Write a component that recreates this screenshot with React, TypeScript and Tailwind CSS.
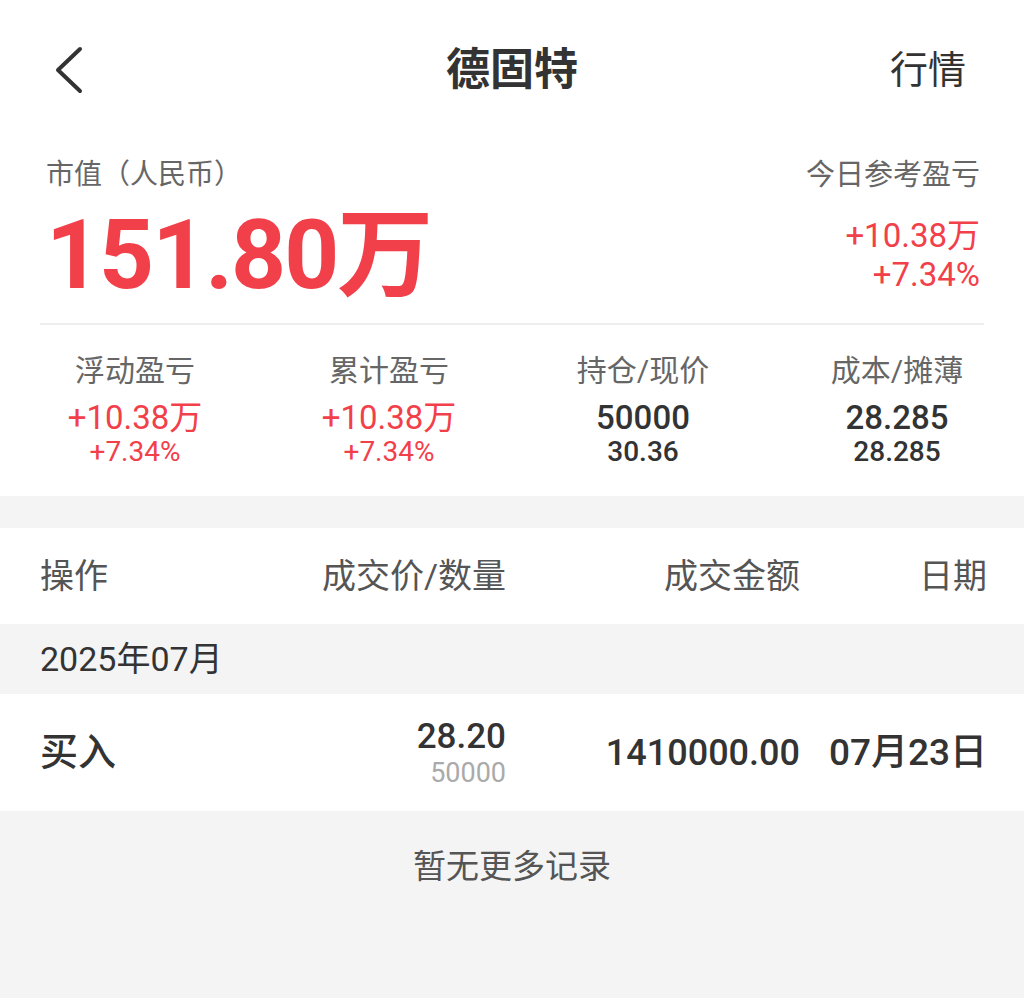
import React from "react";

const stats = [
  { label: "浮动盈亏", top: "+10.38万", bottom: "+7.34%", red: true },
  { label: "累计盈亏", top: "+10.38万", bottom: "+7.34%", red: true },
  { label: "持仓/现价", top: "50000", bottom: "30.36", red: false },
  { label: "成本/摊薄", top: "28.285", bottom: "28.285", red: false },
];

function BackIcon() {
  return (
    <svg width="36" height="48" viewBox="0 0 36 48" fill="none">
      <path
        d="M28 3 L6 24 L28 45"
        stroke="#333"
        strokeWidth="4"
        strokeLinecap="round"
        strokeLinejoin="round"
      />
    </svg>
  );
}

export default function App() {
  return (
    <div className="w-[1024px] min-h-[998px] bg-[#f4f4f4] font-['Roboto','Noto_Sans_CJK_SC',sans-serif] text-[#333]">
      <div className="bg-white">
        {/* nav */}
        <div className="relative flex h-[140px] items-center justify-between pl-[52px] pr-[58px]">
          <BackIcon />
          <div className="absolute left-1/2 -translate-x-1/2 text-[44px] font-bold leading-none">
            德固特
          </div>
          <div className="text-[38px] leading-none">行情</div>
        </div>

        {/* market value */}
        <div className="flex justify-between pl-[46px] pr-[44px] pt-[17px]">
          <div>
            <div className="text-[28px] leading-[36px] text-[#666]">市值（人民币）</div>
            <div className="mt-[14px] text-[96px] font-bold leading-[96px] tracking-[-2px] text-[#f2404a]">
              151.80万
            </div>
          </div>
          <div className="flex flex-col items-end">
            <div className="text-[29px] leading-[36px] text-[#666]">今日参考盈亏</div>
            <div className="mt-[23px] text-[33px] leading-[39px] text-[#f2404a]">+10.38万</div>
            <div className="text-[33px] leading-[39px] text-[#f2404a]">+7.34%</div>
          </div>
        </div>

        <div className="mx-[40px] mt-[20px] h-[2px] bg-[#eeeeee]" />

        {/* stats */}
        <div className="grid grid-cols-4 pb-[30px] pl-[8px] pt-[27px]">
          {stats.map((s) => (
            <div key={s.label} className="flex flex-col items-center">
              <div className="text-[30px] leading-[38px] text-[#666]">{s.label}</div>
              <div
                className={`mt-[10px] text-[33px] leading-[36px] ${
                  s.red ? "text-[#f2404a]" : "font-medium text-[#333]"
                }`}
              >
                {s.top}
              </div>
              <div
                className={`mt-[2px] text-[28px] leading-[28px] ${
                  s.red ? "text-[#f2404a]" : "font-medium text-[#333]"
                }`}
              >
                {s.bottom}
              </div>
            </div>
          ))}
        </div>
      </div>

      <div className="h-[32px]" />

      {/* table header */}
      <div className="flex h-[96px] items-center bg-white pl-[40px] pr-[37px] text-[34px] text-[#555]">
        <div className="w-[200px]">操作</div>
        <div className="w-[266px] text-right">成交价/数量</div>
        <div className="w-[294px] text-right">成交金额</div>
        <div className="flex-1 text-right">日期</div>
      </div>

      <div className="flex h-[70px] items-center pl-[40px] text-[34px] text-[#333]">2025年07月</div>

      <div className="flex h-[117px] items-center bg-white pl-[40px] pr-[37px] font-medium">
        <div className="w-[200px] text-[38px]">买入</div>
        <div className="flex w-[266px] flex-col items-end">
          <div className="text-[35px] leading-[40px]">28.20</div>
          <div className="text-[27px] leading-[32px] font-normal text-[#aaa]">50000</div>
        </div>
        <div className="w-[294px] text-right text-[36px]">1410000.00</div>
        <div className="flex-1 text-right text-[37px]">07月23日</div>
      </div>

      <div className="pt-[36px] text-center text-[33px] leading-[40px] text-[#555]">暂无更多记录</div>
    </div>
  );
}
